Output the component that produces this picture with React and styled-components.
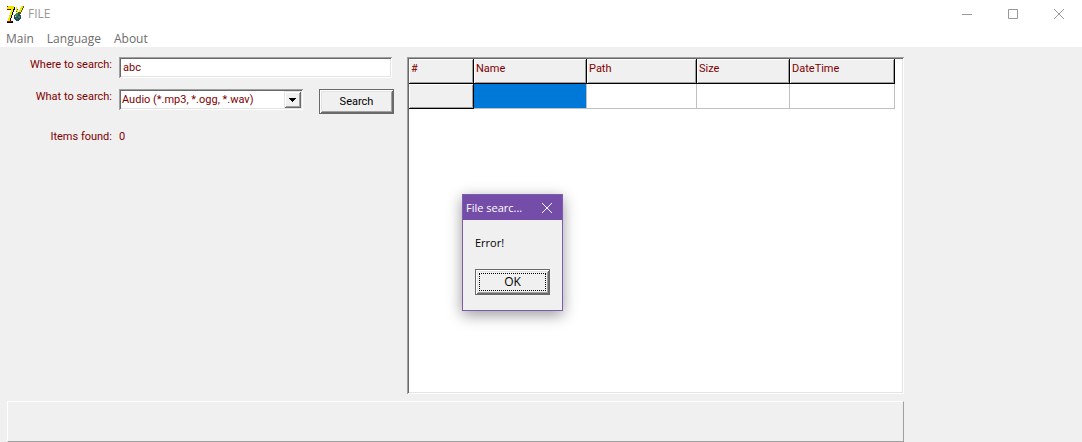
import React from "react";
import styled, { createGlobalStyle } from "styled-components";

const pixelFont = `Roboto, "Liberation Sans", sans-serif`;
const uiFont = `"Open Sans", "Noto Sans", sans-serif`;

const GlobalStyle = createGlobalStyle`
  * { box-sizing: border-box; }
  body { margin: 0; background: #f0f0f0; font-family: ${pixelFont}; font-size: 11px; color: #800000; }
  button, input, select { font: inherit; color: inherit; }
`;

const Window = styled.div`
  position: relative;
  display: flex;
  flex-direction: column;
  min-height: 100vh;
`;

const TitleBar = styled.header`
  display: flex;
  align-items: center;
  height: 27px;
  padding-left: 6px;
  background: #fff;
  color: #999;
  font-family: ${uiFont};
`;

const Title = styled.h1`
  flex: 1;
  margin: 0 0 0 4px;
  font-size: 12px;
  line-height: 16px;
  font-weight: 400;
`;

const Caption = styled.button`
  display: flex;
  align-items: center;
  justify-content: center;
  width: 46px;
  height: 27px;
  padding: 0;
  border: 0;
  background: none;
`;

const MenuBar = styled.nav`
  display: flex;
  gap: 13px;
  height: 20px;
  padding-left: 6px;
  background: #fff;
  font-family: ${uiFont};
  font-size: 12px;
  line-height: 24px;
`;

const MenuItem = styled.a`
  color: #6d6d6d;
  text-decoration: none;
  height: 20px;
`;

const Content = styled.main`
  flex: 1;
  display: flex;
  gap: 13px;
  padding: 10px 178px 7px 7px;
`;

const Form = styled.form`
  flex: none;
  display: grid;
  grid-template-columns: 105px 275px;
  column-gap: 7px;
  row-gap: 11px;
  align-content: start;
  line-height: 16px;
`;

const Label = styled.label`
  text-align: right;
`;

const ResultLabel = styled(Label).attrs({ as: "span" })`
  padding-top: 4px;
`;

const Result = styled.output`
  padding-top: 4px;
`;

const TextBox = styled.input`
  width: 273px;
  height: 21px;
  padding: 0 4px;
  border: 0;
  outline: 0;
  background: #fff;
  box-shadow: inset 1px 1px #a0a0a0, inset -1px -1px #fff, inset 2px 2px #696969, inset -2px -2px #e3e3e3;
`;

const FieldRow = styled.div`
  display: flex;
  justify-content: space-between;
  align-items: flex-start;
`;

const SelectBox = styled.div`
  display: flex;
  position: relative;
  width: 184px;
  height: 21px;
`;

const Select = styled.select`
  flex: 1;
  appearance: none;
  padding: 0 20px 0 3px;
  border: 0;
  border-radius: 0;
  background: #fff;
  box-shadow: inset 1px 1px #a0a0a0, inset -1px -1px #fff, inset 2px 2px #696969, inset -2px -2px #e3e3e3;
`;

const DropArrow = styled.span`
  position: absolute;
  top: 2px;
  right: 2px;
  display: flex;
  align-items: center;
  justify-content: center;
  width: 17px;
  height: 17px;
  background: #f0f0f0;
  box-shadow: inset 1px 1px #e3e3e3, inset -1px -1px #696969, inset 2px 2px #fff, inset -2px -2px #a0a0a0;
  pointer-events: none;
`;

const PushButton = styled.button`
  width: 75px;
  height: ${(p) => (p.$focused ? 26 : 25)}px;
  padding: ${(p) => (p.$focused ? 4 : 0)}px;
  border: 1px solid #696969;
  background: #f0f0f0;
  color: #000;
  font-family: ${(p) => (p.$focused ? uiFont : pixelFont)};
  font-size: ${(p) => (p.$focused ? 12 : 11)}px;
  box-shadow: inset 1px 1px #fff, inset -1px -1px #696969, inset 2px 2px #e3e3e3, inset -2px -2px #a0a0a0;
`;

const FocusRing = styled.span`
  display: block;
  height: 18px;
  margin: -1px;
  border: 1px dotted #000;
  line-height: 16px;
`;

const GridPanel = styled.section`
  flex: 1;
  min-width: 0;
  padding: 2px;
  background: #fff;
  box-shadow: inset 1px 1px #a0a0a0, inset -1px -1px #fff, inset 2px 2px #696969, inset -2px -2px #e3e3e3;
`;

const Table = styled.table`
  table-layout: fixed;
  width: 486px;
  border-collapse: separate;
  border-spacing: 0;
  line-height: 16px;
`;

const HeadCell = styled.th`
  width: ${(p) => p.$width}px;
  height: 25px;
  padding: 2px;
  border: solid #000;
  border-width: 0 1px 1px 0;
  background: #f0f0f0;
  box-shadow: inset 1px 1px #fff, inset -1px -1px #a0a0a0;
  font-weight: 400;
  text-align: left;
  vertical-align: top;
`;

const Cell = styled.td`
  height: 25px;
  padding: 2px;
  border: solid #c0c0c0;
  border-width: 0 1px 1px 0;
  background: ${(p) => (p.$selected ? "#0078d7" : "#fff")};
`;

const StatusPanel = styled.footer`
  height: 41px;
  margin: 0 178px 0 7px;
  border: 1px solid;
  border-color: #fff #a0a0a0 #a0a0a0 #fff;
`;

const Dialog = styled.section`
  position: absolute;
  top: 194px;
  left: 462px;
  width: 101px;
  border: 1px solid #7c5bb0;
  background: #f0f0f0;
  color: #000;
  font-family: ${uiFont};
  font-size: 11px;
  line-height: 16px;
  box-shadow: 0 4px 14px rgba(0, 0, 0, 0.4);
`;

const DialogTitle = styled.header`
  display: flex;
  align-items: center;
  justify-content: space-between;
  height: 25px;
  padding-left: 3px;
  background: #744da9;
  color: #fff;
`;

const DialogHeading = styled.h2`
  margin: 0;
  font-size: 11px;
  font-weight: 400;
`;

const DialogClose = styled.button`
  display: flex;
  align-items: center;
  justify-content: center;
  width: 31px;
  height: 25px;
  padding: 0;
  border: 0;
  background: none;
`;

const DialogBody = styled.div`
  padding: 15px 12px;
`;

const Message = styled.p`
  margin: 0 0 18px;
`;

const AppIcon = () => (
  <svg width="18" height="18" viewBox="0 0 18 18" shapeRendering="crispEdges" aria-hidden="true">
    <path d="M1 2h8v3H8v2H7v3H6v3H5v3h2v2H1v-2h1v-3h1v-3h1V7h1V5H1z" fill="#000" />
    <path d="M1 1h7v3H7v3H6v3H5v3H4v3H2v-3h1v-3h1V7h1V4H1z" fill="#f0e800" />
    <path d="M1 1h1v1H1zM1 4h3v1H1zM1 16h5v1H1z" fill="#901000" />
    <path d="M10 2h1v2h1v3h1V5h1V3h1V1h3v2h-1v2h-1v2h-1v2h-4V7h-1z" fill="#605800" />
    <path d="M10 2h1v3h1v3h-1V6h-1zM15 1h2v2h-1v2h-1v2h-2V5h1V3h1z" fill="#f0e800" />
    <path d="M10 8h3v1h1v1h1v4h-1v1h-1v1h-3v-1H9v-1H8v-4h1V9h1z" fill="#28485c" />
    <path d="M10 8h2v2h-1v2H9V9h1zM12 11h2v2h-2z" fill="#38904c" />
    <path d="M11 10h1v1h-1zM10 13h2v1h-2z" fill="#3068a8" />
    <path d="M9 11h1v1H9z" fill="#c0c8c0" />
  </svg>
);

const columns = [
  ["#", 65],
  ["Name", 113],
  ["Path", 110],
  ["Size", 93],
  ["DateTime", 105],
];

export default function App() {
  return (
    <>
      <GlobalStyle />
      <Window>
        <TitleBar>
          <AppIcon />
          <Title>FILE</Title>
          <Caption aria-label="Minimize">
            <svg width="10" height="10"><path d="M0 5.5h10" stroke="#999" /></svg>
          </Caption>
          <Caption aria-label="Maximize">
            <svg width="10" height="10"><path d="M.5.5h9v9h-9z" fill="none" stroke="#999" /></svg>
          </Caption>
          <Caption aria-label="Close">
            <svg width="10" height="10"><path d="M0 0l10 10M10 0L0 10" stroke="#999" /></svg>
          </Caption>
        </TitleBar>
        <MenuBar>
          <MenuItem href="#main">Main</MenuItem>
          <MenuItem href="#language">Language</MenuItem>
          <MenuItem href="#about">About</MenuItem>
        </MenuBar>
        <Content>
          <Form onSubmit={(e) => e.preventDefault()}>
            <Label htmlFor="where">Where to search:</Label>
            <TextBox id="where" defaultValue="abc" />
            <Label htmlFor="what">What to search:</Label>
            <FieldRow>
              <SelectBox>
                <Select id="what">
                  <option>Audio (*.mp3, *.ogg, *.wav)</option>
                </Select>
                <DropArrow>
                  <svg width="7" height="4" shapeRendering="crispEdges"><path d="M0 0h7v1H0zM1 1h5v1H1zM2 2h3v1H2zM3 3h1v1H3z" /></svg>
                </DropArrow>
              </SelectBox>
              <PushButton type="submit">Search</PushButton>
            </FieldRow>
            <ResultLabel>Items found:</ResultLabel>
            <Result>0</Result>
          </Form>
          <GridPanel>
            <Table>
              <thead>
                <tr>
                  {columns.map(([name, width]) => (
                    <HeadCell key={name} $width={width} scope="col">{name}</HeadCell>
                  ))}
                </tr>
              </thead>
              <tbody>
                <tr>
                  <HeadCell scope="row" />
                  <Cell $selected />
                  <Cell />
                  <Cell />
                  <Cell />
                </tr>
              </tbody>
            </Table>
          </GridPanel>
        </Content>
        <StatusPanel />
        <Dialog role="alertdialog" aria-labelledby="dialog-title" aria-describedby="dialog-message">
          <DialogTitle>
            <DialogHeading id="dialog-title">File searc...</DialogHeading>
            <DialogClose aria-label="Close">
              <svg width="10" height="10"><path d="M0 0l10 10M10 0L0 10" stroke="#fff" /></svg>
            </DialogClose>
          </DialogTitle>
          <DialogBody>
            <Message id="dialog-message">Error!</Message>
            <PushButton $focused><FocusRing>OK</FocusRing></PushButton>
          </DialogBody>
        </Dialog>
      </Window>
    </>
  );
}
